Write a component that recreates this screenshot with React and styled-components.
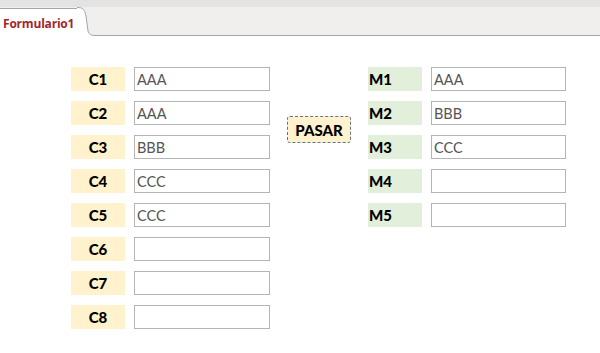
import React from "react";
import styled, { createGlobalStyle } from "styled-components";

const Global = createGlobalStyle`
  html, body { margin: 0; padding: 0; background: #ffffff; }
  body { font-family: Lato, "Open Sans", "Liberation Sans", sans-serif; }
`;

const Page = styled.div`
  width: 600px;
  height: 353px;
  background: #ffffff;
  overflow: hidden;
`;

const TabBar = styled.div`
  height: 28px;
  display: flex;
  align-items: flex-end;
  background: #f0efed;
  border-top: 7px solid #e3e3e3;
  border-bottom: 1px solid #a6a6a6;
`;

const Tab = styled.div`
  display: flex;
  align-items: flex-end;
  height: 29px;
  margin-bottom: -1px;
`;

const TabLabel = styled.div`
  height: 28px;
  width: 77px;
  box-sizing: border-box;
  background: #ffffff;
  border-top: 1px solid #a6a6a6;
  padding-left: 3px;
  padding-top: 2px;
  font-family: "Open Sans", Lato, sans-serif;
  font-weight: 700;
  font-size: 12px;
  letter-spacing: -0.2px;
  color: #a4262c;
  line-height: 26px;
  white-space: nowrap;
`;

const TabEdge = styled.svg`
  display: block;
  width: 18px;
  height: 29px;
`;

const Content = styled.div`
  display: flex;
  align-items: flex-start;
  padding: 31px 0 0 71px;
  gap: 17px;
`;

const Column = styled.div`
  display: flex;
  flex-direction: column;
  gap: 10px;
`;

const Row = styled.div`
  display: flex;
  gap: 9px;
  height: 24px;
`;

const Label = styled.div`
  width: 54px;
  height: 24px;
  box-sizing: border-box;
  background: ${(p) => (p.$tone === "green" ? "#e2efda" : "#fff2cc")};
  display: flex;
  align-items: center;
  justify-content: ${(p) => (p.$tone === "green" ? "flex-start" : "center")};
  padding-left: ${(p) => (p.$tone === "green" ? "1px" : "0")};
  font-weight: 900;
  font-size: 15px;
  color: #000000;
`;

const Field = styled.div`
  width: ${(p) => p.$w}px;
  height: 24px;
  box-sizing: border-box;
  border: 1px solid #b4b4b4;
  background: #ffffff;
  display: flex;
  align-items: center;
  padding-left: 2px;
  font-size: 14.5px;
  color: #555555;
`;

const ButtonSlot = styled.div`
  padding-top: 49px;
`;

const Button = styled.div`
  width: 64px;
  height: 27px;
  box-sizing: border-box;
  background: #fff2cc;
  border: 1px dashed #5f7397;
  border-radius: 3px;
  display: flex;
  align-items: center;
  justify-content: center;
  font-weight: 900;
  font-size: 15px;
  color: #000000;
`;

const left = [
  ["C1", "AAA"],
  ["C2", "AAA"],
  ["C3", "BBB"],
  ["C4", "CCC"],
  ["C5", "CCC"],
  ["C6", ""],
  ["C7", ""],
  ["C8", ""],
];

const right = [
  ["M1", "AAA"],
  ["M2", "BBB"],
  ["M3", "CCC"],
  ["M4", ""],
  ["M5", ""],
];

export default function App() {
  return (
    <Page>
      <Global />
      <TabBar>
        <Tab>
          <TabLabel>Formulario1</TabLabel>
          <TabEdge viewBox="0 0 18 29">
            <path d="M0 0.5 C6 0.5 7.5 2 9 9 L11 24 C12 27.5 14 28.5 18 28.5 L18 29 L0 29 Z" fill="#ffffff" />
            <path d="M0 0.5 C6 0.5 7.5 2 9 9 L11 24 C12 27.5 14 28.5 18 28.5" fill="none" stroke="#a6a6a6" strokeWidth="1" />
          </TabEdge>
        </Tab>
      </TabBar>
      <Content>
        <Column>
          {left.map(([k, v]) => (
            <Row key={k}>
              <Label>{k}</Label>
              <Field $w={136}>{v}</Field>
            </Row>
          ))}
        </Column>
        <ButtonSlot>
          <Button>PASAR</Button>
        </ButtonSlot>
        <Column>
          {right.map(([k, v]) => (
            <Row key={k}>
              <Label $tone="green">{k}</Label>
              <Field $w={135}>{v}</Field>
            </Row>
          ))}
        </Column>
      </Content>
    </Page>
  );
}
